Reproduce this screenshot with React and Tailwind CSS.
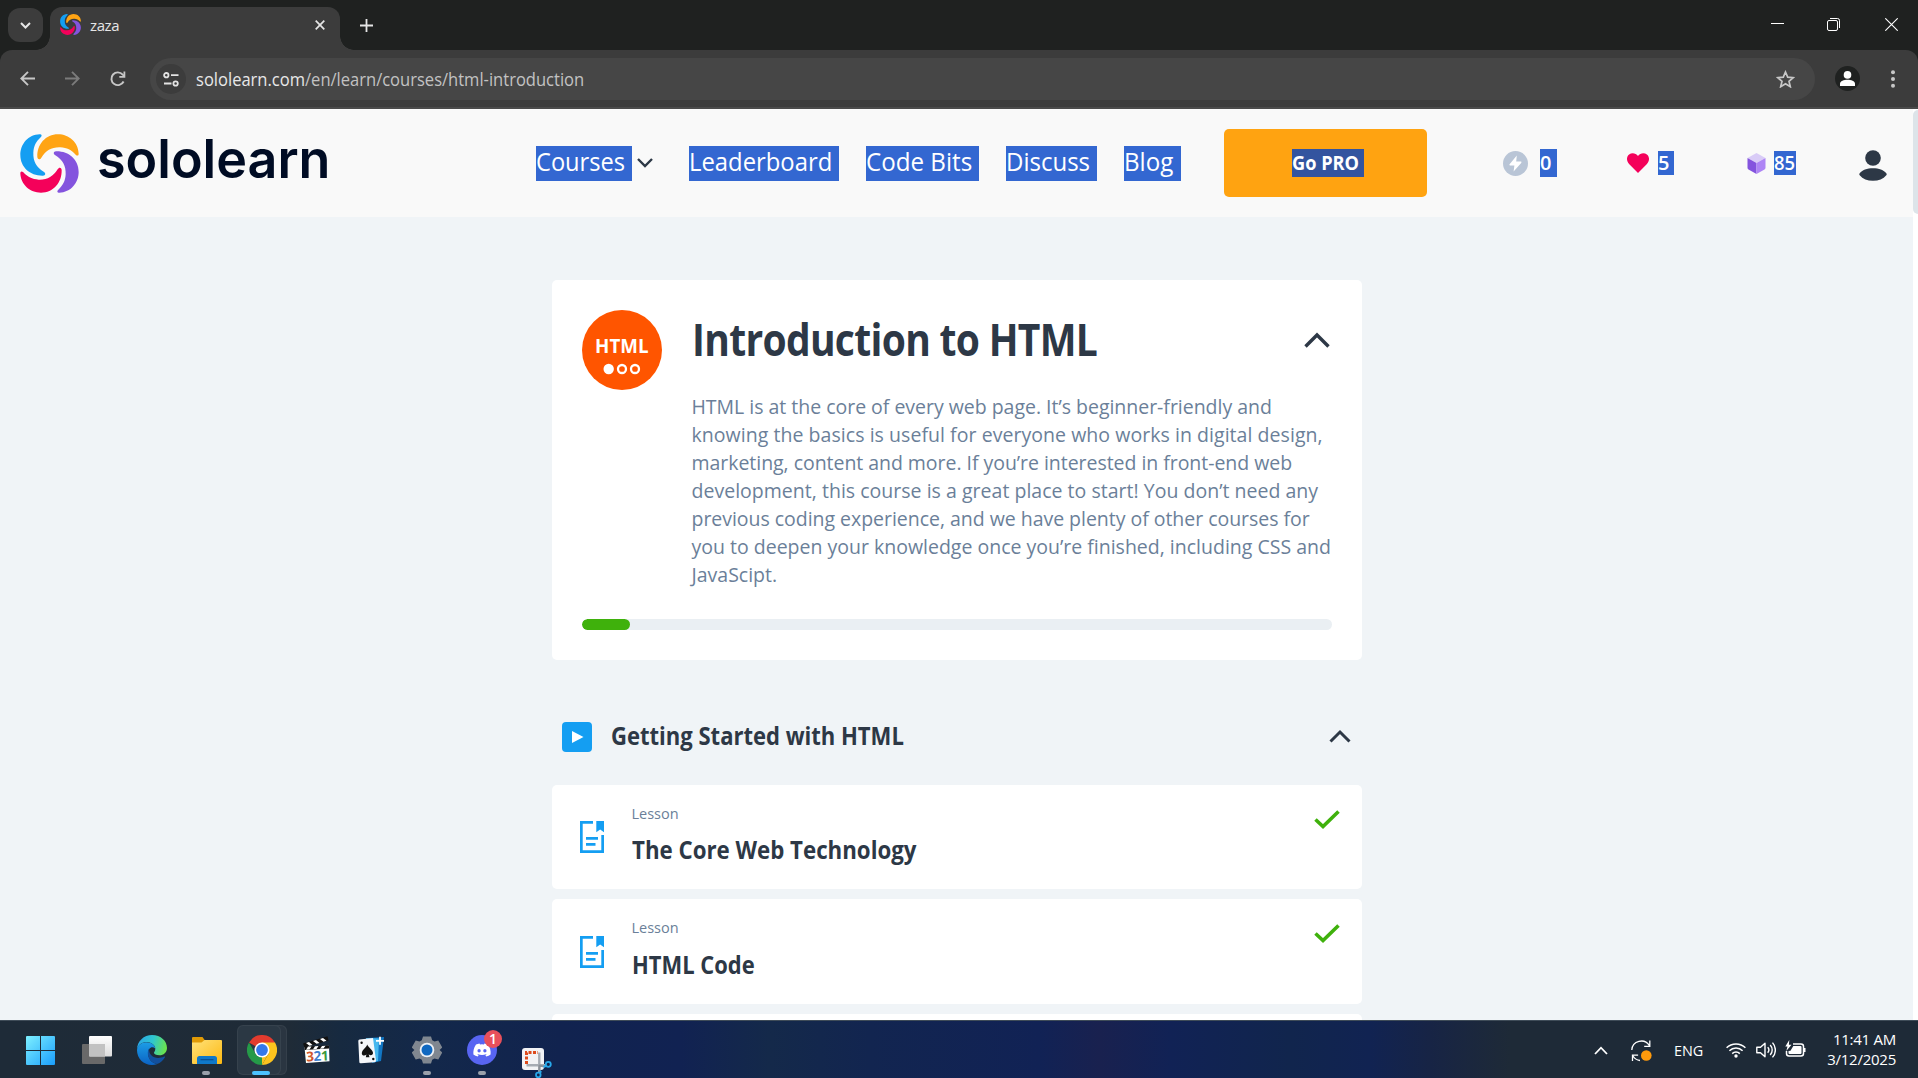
import React from "react";

const SWOOSH =
  "M118 41C84 42 60 70 60 103C60 140 90 166 128 165C136 164 137 157 130 153C108 139 98 122 99 96C100 76 107 63 121 50C126 45 124 41 118 41Z";

function Logo({ className }) {
  return (
    <svg viewBox="59 40 177 177" className={className}>
      <path d={SWOOSH} fill="#149ef2" />
      <path d={SWOOSH} fill="#ffa414" transform="rotate(90 147.5 128.5)" />
      <path d={SWOOSH} fill="#8454de" transform="rotate(180 147.5 128.5)" />
      <path d={SWOOSH} fill="#f4015a" transform="rotate(270 147.5 128.5)" />
    </svg>
  );
}

function Stroke({ className, box, d, w = 2, children }) {
  return (
    <svg viewBox={box} className={className} fill="none" stroke="currentColor" strokeWidth={w}>
      {d && <path d={d} />}
      {children}
    </svg>
  );
}

function TabStrip() {
  return (
    <div className="flex h-[50px] shrink-0 bg-[#1f2120] text-[#e6e6e6]">
      <button className="mt-2 ml-2 flex h-[34px] w-[35px] items-center justify-center rounded-xl bg-[#3c3c3c]">
        <Stroke className="h-[7px] w-[11px]" box="0 0 11 7" d="M1 1l4.500 4.500L10 1" w={2} />
      </button>
      <div className="relative mt-[7px] ml-[7px] flex h-[43px] w-[290px] items-start rounded-t-xl bg-[#3c3c3c] pl-[10px]">
        <div className="absolute bottom-0 -left-[14px] h-[14px] w-[14px] bg-[radial-gradient(circle_at_0_0,transparent_13.5px,#3c3c3c_14px)]" />
        <div className="absolute -right-[14px] bottom-0 h-[14px] w-[14px] bg-[radial-gradient(circle_at_100%_0,transparent_13.5px,#3c3c3c_14px)]" />
        <Logo className="mt-[7px] h-[21px] w-[21px]" />
        <span className="mt-[8px] ml-[9px] text-[15px] leading-[20px] tracking-[-0.4px]">zaza</span>
        <Stroke className="mt-[13px] mr-[15px] ml-auto h-[10px] w-[10px]" box="0 0 10 10" d="M.7.7l8.600 8.600M9.300.7L.7 9.300" w={1.7} />
      </div>
      <Stroke className="mt-[18.500px] ml-[19.500px] h-[13px] w-[13px]" box="0 0 13 13" d="M6.500 0v13M0 6.500h13" w={1.8} />
      <div className="ml-auto flex pr-[20px] text-white">
        <Stroke className="mt-[18px] h-[13px] w-[13px]" box="0 0 13 13" d="M0 5.500h13" w={1} />
        <Stroke className="mt-[18px] ml-[43px] h-[13px] w-[13px]" box="0 0 13 13" w={1}>
          <rect x=".5" y="2.500" width="10" height="10" rx="1.500" />
          <path d="M3 .5h7.500a2 2 0 0 1 2 2V10" />
        </Stroke>
        <Stroke className="mt-[18px] ml-[45px] h-[13px] w-[13px]" box="0 0 13 13" d="M.3.3l12.400 12.400M12.700.3L.3 12.700" w={1.1} />
      </div>
    </div>
  );
}

function Toolbar() {
  return (
    <div className="h-[59px] shrink-0 bg-[#1f2120]">
      <div className="flex h-full items-start rounded-t-xl border-b-2 border-[#4a4a4a] bg-[#3c3c3c] pl-[20px]">
        <Stroke className="mt-[21px] h-[15px] w-[15px] text-[#c7c7c7]" box="0 0 15 15" d="M15 7.500H1.500M8 .8L1.300 7.500L8 14.200" w={1.9} />
        <Stroke className="mt-[21px] ml-[30px] h-[15px] w-[15px] text-[#7b7b7b]" box="0 0 15 15" d="M0 7.500h13.500M7 .8l6.700 6.700L7 14.200" w={1.9} />
        <svg viewBox="0 0 16 16" className="mt-[20.500px] ml-[30px] h-[16px] w-[16px]">
          <path d="M13.600 10.500A6.400 6.400 0 1 1 12.700 3.600L14.300 5.200" fill="none" stroke="#c7c7c7" strokeWidth="1.900" />
          <path d="M15.300 .5v6.200H9.300V4.900h4.200V.5z" fill="#c7c7c7" />
        </svg>
        <div className="mt-2 ml-[24px] flex h-[42px] w-[1665px] items-start rounded-full bg-[#464646] pl-[6px]">
          <div className="mt-[6px] flex h-[30px] w-[30px] items-center justify-center rounded-full bg-[#3c3c3c]">
            <Stroke className="h-[15px] w-[16px] text-[#e3e3e3]" box="0 0 16 15" w={1.8}>
              <circle cx="3.300" cy="3.200" r="2.200" />
              <circle cx="12.600" cy="11.500" r="2.200" />
              <path d="M8 3.200h7.500M1 11.500h7.500" />
            </Stroke>
          </div>
          <div className="mt-[8px] ml-[10px] w-[400px] origin-left scale-x-[0.945] text-[17.500px] leading-[26px] whitespace-nowrap text-[#c2c2c2]">
            <span className="text-[#e8e8e8]">sololearn.com</span>/en/learn/courses/html-introduction
          </div>
          <svg viewBox="0 0 19 18" className="mt-[12px] mr-[20px] ml-auto h-[18px] w-[19px]" fill="none" stroke="#c7c7c7" strokeWidth="1.700">
            <path d="M9.500 2l2.200 5.100 5.500.5-4.200 3.700 1.300 5.400-4.800-2.900-4.800 2.900L6 11.300 1.800 7.600l5.500-.5z" />
          </svg>
        </div>
        <div className="mt-[16px] ml-[20px] flex h-[25px] w-[25px] items-center justify-center rounded-full bg-[#1f2120]">
          <svg viewBox="0 0 15 15" className="h-[15px] w-[15px]" fill="#fff">
            <circle cx="7.500" cy="3.900" r="3.800" />
            <path d="M0 15v-2.300C0 10 4 8.700 7.500 8.700S15 10 15 12.700V15z" />
          </svg>
        </div>
        <svg viewBox="0 0 4 18" className="mt-[20px] ml-[30.500px] h-[18px] w-[4px]" fill="#c7c7c7">
          <circle cx="2" cy="2.200" r="2" />
          <circle cx="2" cy="9" r="2" />
          <circle cx="2" cy="15.800" r="2" />
        </svg>
      </div>
    </div>
  );
}

function NavItem({ box, text, children }) {
  return (
    <div className={"h-[35px] bg-[#3367d1] text-[25px] leading-[31px] whitespace-nowrap text-white " + box}>
      <span className={"inline-block origin-left " + text}>{children}</span>
    </div>
  );
}

function SiteHeader() {
  return (
    <header className="flex h-[108px] items-center bg-[#f9f9f9] pl-[19.500px]">
      <Logo className="h-[59px] w-[59px]" />
      <div className="ml-[18.500px] w-[240px] origin-left scale-x-[0.982] pb-[9px] font-['Inter',sans-serif] text-[53px] leading-[60px] font-semibold text-[#000c24]">
        sololearn
      </div>
      <nav className="ml-[199px] flex items-center">
        <NavItem box="w-[96px]" text="scale-x-[0.945]">Courses</NavItem>
        <Stroke className="ml-[5px] h-[10px] w-[16px] text-[#2d3846]" box="0 0 16 10" d="M1 1l7 7 7-7" w={2.4} />
        <NavItem box="ml-[36px] w-[150px]" text="scale-x-[0.953]">Leaderboard</NavItem>
        <NavItem box="ml-[27px] w-[113px]" text="scale-x-[0.966]">Code Bits</NavItem>
        <NavItem box="ml-[27px] w-[91px]" text="scale-x-[0.96]">Discuss</NavItem>
        <NavItem box="ml-[27px] w-[57px]" text="scale-x-[0.965]">Blog</NavItem>
      </nav>
      <button className="ml-[43px] flex h-[68px] w-[203px] items-center rounded-[5px] bg-[#ffa311] pl-[68px]">
        <span className="h-[28px] w-[72px] bg-[#33549f] text-left text-[20px] leading-[28px] font-bold text-white">
          <span className="inline-block origin-left scale-x-[0.91] whitespace-nowrap">Go PRO</span>
        </span>
      </button>
      <svg viewBox="0 0 25 25" className="ml-[76px] h-[25px] w-[25px]">
        <circle cx="12.500" cy="12.500" r="12.500" fill="#b9c5d6" />
        <path d="M13.800 4.500L6.600 13.200c-.5.7-.2 1.200.5 1.200h4.300l-.8 6.100 7.600-8.600c.6-.8.2-1.400-.5-1.400h-4.500z" fill="#fff" />
      </svg>
      <span className="ml-[12px] h-[28px] w-[17px] bg-[#3367d1] text-[20px] leading-[28px] font-semibold text-white">0</span>
      <svg viewBox="0 0 22 20" className="ml-[70px] h-[20px] w-[22px]">
        <path d="M11 20L2.300 11.300C-.8 8.200-.7 3.500 2.100 1.400 4.800-.7 8.800-.2 11 3c2.200-3.200 6.200-3.700 8.900-1.600 2.800 2.100 2.900 6.800-.2 9.900z" fill="#f4015a" />
      </svg>
      <span className="ml-[9px] h-[24px] w-[16px] bg-[#3367d1] text-[20px] leading-[24px] font-semibold text-white">5</span>
      <svg viewBox="0 0 19 21" className="ml-[73px] h-[21px] w-[19px]">
        <path d="M9.500 0L18.500 5 9.500 10 .5 5z" fill="#d9ccf7" />
        <path d="M.5 5l9 5v11L1.500 16.500a2 2 0 0 1-1-1.800z" fill="#8454de" />
        <path d="M18.500 5l-9 5v11l8-4.500a2 2 0 0 0 1-1.800z" fill="#ae85f5" />
      </svg>
      <span className="ml-[8px] h-[24px] w-[22px] bg-[#3367d1] text-[20px] leading-[24px] font-semibold text-white">
        <span className="inline-block origin-left scale-x-[0.92]">85</span>
      </span>
      <svg viewBox="0 0 28 31" className="mt-[5px] ml-[63px] h-[31px] w-[28px]" fill="#2d3846">
        <circle cx="14" cy="8" r="7.800" />
        <path d="M.5 23.500c2.700-3.700 7.500-5.300 13.500-5.300s10.800 1.600 13.500 5.300c.4.600.3 1.200-.2 1.700-3 3.600-7.700 5.600-13.300 5.600S3.700 28.800.7 25.200c-.5-.5-.6-1.100-.2-1.700z" />
      </svg>
    </header>
  );
}

function CourseCard() {
  return (
    <section className="h-[380px] rounded-[5px] bg-white px-[30px] pt-[30px]">
      <div className="flex h-[309px] items-start">
        <div className="flex h-[80px] w-[80px] shrink-0 flex-col items-center rounded-full bg-[#ff5500]">
          <span className="mt-[22px] h-[28px] scale-x-[0.96] text-[19.500px] leading-[27px] font-bold text-white">HTML</span>
          <svg viewBox="0 0 38 12" className="mt-[3px] h-[12px] w-[38px]">
            <circle cx="5.700" cy="6" r="5.200" fill="#fff" />
            <circle cx="19" cy="6" r="4" fill="none" stroke="#fff" strokeWidth="2.300" />
            <circle cx="32" cy="6" r="4" fill="none" stroke="#fff" strokeWidth="2.300" />
          </svg>
        </div>
        <div className="ml-[30px] w-[640px]">
          <div className="flex items-start justify-between">
            <h1 className="mt-[1px] w-[460px] origin-left scale-x-[0.867] text-[45px] leading-[56px] font-bold tracking-[-0.8px] whitespace-nowrap text-[#2d3846]">
              Introduction to HTML
            </h1>
            <Stroke className="mt-[21.500px] mr-[2px] h-[16px] w-[26px] shrink-0 text-[#2d3846]" box="0 0 26 16" d="M1.500 14.500L13 3l11.500 11.500" w={3.4} />
          </div>
          <p className="mt-[26px] -ml-[0.500px] text-[19.500px] leading-[28px] whitespace-nowrap text-[#6b7f99]">
            <span className="tracking-[-0.02px]">HTML is at the core of every web page. It’s beginner-friendly and</span>
            <br />
            <span className="tracking-[0.050px]">knowing the basics is useful for everyone who works in digital design,</span>
            <br />
            <span className="tracking-[-0.040px]">marketing, content and more. If you’re interested in front-end web</span>
            <br />
            <span className="tracking-[0.020px]">development, this course is a great place to start! You don’t need any</span>
            <br />
            <span className="tracking-[-0.030px]">previous coding experience, and we have plenty of other courses for</span>
            <br />
            you to deepen your knowledge once you’re finished, including CSS and
            <br />
            JavaScipt.
          </p>
        </div>
      </div>
      <div className="h-[11px] overflow-hidden rounded-full bg-[#eaeff3]">
        <div className="h-full w-[48px] rounded-full bg-[#3fb10c]" />
      </div>
    </section>
  );
}

function Lesson({ title, scale, height, iconTop, titleTop }) {
  return (
    <article className={"mb-[10px] flex items-start rounded-[5px] bg-white pl-[28px] " + height}>
      <svg viewBox="0 0 24 32" className={"h-[32px] w-[24px] " + iconTop} fill="#149ef2">
        <path d="M0 0h13v2.700H2.700v26.600h18.600V14H24v18H0z" />
        <path d="M16.300 0H24v11.300l-3.850-2.700-3.850 2.700zM6 16h12v2.700H6zM6 22h9.500v2.700H6z" />
      </svg>
      <div className="mt-[19px] ml-[27.500px] text-[#2d3846]">
        <div className="text-[14.500px] leading-[20px] text-[#6b7f99]">Lesson</div>
        <h3 className={"origin-left text-[24.500px] leading-[32px] font-bold whitespace-nowrap " + titleTop + " " + scale}>{title}</h3>
      </div>
      <svg viewBox="0 0 26 19" className="mt-[24.500px] mr-[22px] ml-auto h-[19px] w-[26px]" fill="none" stroke="#3fb10c" strokeWidth="3.600">
        <path d="M1.500 9.500l7.500 7L24.500 1.500" />
      </svg>
    </article>
  );
}

function Page() {
  return (
    <div className="flex h-[911px] shrink-0 overflow-hidden bg-[#f0f4f7]">
      <div className="w-[1913px]">
        <SiteHeader />
        <main className="mt-[63px] ml-[552px] w-[810px]">
          <CourseCard />
          <div className="mt-[62px] mb-[33px] flex h-[30px] items-start pl-[10px]">
            <svg viewBox="0 0 30 30" className="h-[30px] w-[30px]">
              <rect width="30" height="30" rx="4" fill="#149ef2" />
              <path d="M10 9l11.500 6L10 21z" fill="#fff" />
            </svg>
            <h2 className="ml-[19px] origin-left scale-x-[0.899] text-[24.500px] leading-[27px] font-bold whitespace-nowrap text-[#2d3846]">
              Getting Started with HTML
            </h2>
            <Stroke className="mt-[7px] mr-[11.500px] ml-auto h-[14px] w-[22px] text-[#2d3846]" box="0 0 22 14" d="M1.500 12.500L11 3l9.500 9.500" w={3} />
          </div>
          <Lesson title="The Core Web Technology" scale="scale-x-[0.909]" height="h-[104px]" iconTop="mt-[36px]" titleTop="mt-[10px]" />
          <Lesson title="HTML Code" scale="scale-x-[0.895]" height="h-[105px]" iconTop="mt-[37px]" titleTop="mt-[11px]" />
          <div className="h-[100px] rounded-[5px] bg-white" />
        </main>
      </div>
      <div className="w-[5px] bg-white pt-px">
        <div className="h-[104px] rounded-l-full bg-[#dde4e9]" />
      </div>
    </div>
  );
}

function Slot({ children, pill }) {
  return (
    <div className="relative flex h-[58px] w-[55.200px] shrink-0 items-center justify-center pt-[2px]">
      {children}
      {pill === "on" && <div className="absolute bottom-[3px] h-[4px] w-[18px] rounded-full bg-[#4cc2ff]" />}
      {pill === "idle" && <div className="absolute bottom-[3px] h-[4px] w-[8px] rounded-full bg-[#9aa0ab]" />}
    </div>
  );
}

function WindowsIcon() {
  return (
    <svg viewBox="0 0 29 29" className="h-[29px] w-[29px]">
      <defs>
        <linearGradient id="win" x1="0" y1="0" x2="1" y2="1">
          <stop offset="0" stopColor="#7ef0ff" />
          <stop offset="1" stopColor="#1a9dfb" />
        </linearGradient>
      </defs>
      <path d="M1 0h13v14H0V1a1 1 0 0 1 1-1zM15 0h13a1 1 0 0 1 1 1v13H15zM0 15h14v14H1a1 1 0 0 1-1-1zM15 15h14v13a1 1 0 0 1-1 1H15z" fill="url(#win)" />
    </svg>
  );
}

function TaskViewIcon() {
  return (
    <svg viewBox="0 0 30 28" className="ml-[2px] h-[28px] w-[30px]">
      <defs>
        <linearGradient id="tvw" x1="0" y1="0" x2="0" y2="1">
          <stop offset="0" stopColor="#fff" />
          <stop offset="1" stopColor="#dcdcdc" />
        </linearGradient>
      </defs>
      <rect y="8" width="23" height="20" rx="1" fill="#696969" />
      <rect x="7" width="23" height="20.500" rx="1" fill="url(#tvw)" />
      <path d="M7 8h16v12.500H8a1 1 0 0 1-1-1z" fill="#c2c2c2" />
    </svg>
  );
}

function EdgeIcon() {
  return (
    <svg viewBox="0 0 30 30" className="ml-[2px] h-[30px] w-[30px]">
      <defs>
        <linearGradient id="eg" x1="0" y1=".3" x2="1" y2=".5">
          <stop offset="0" stopColor="#2aa5e8" />
          <stop offset=".5" stopColor="#2fc6cf" />
          <stop offset="1" stopColor="#6be34b" />
        </linearGradient>
        <linearGradient id="eb" x1="0" y1="0" x2="0" y2="1">
          <stop offset="0" stopColor="#1c9de6" />
          <stop offset="1" stopColor="#0b62c4" />
        </linearGradient>
      </defs>
      <path d="M0 15C0 6 7 0 15 0c9 0 15 6 15 13 0 4.500-3.500 7.300-7.500 7.300-3.500 0-5.500-1.300-5.500-2.600 0-.9 1.300-1.400 1.300-4C18.300 10 14 7 9.500 7 4 7 .5 11 0 15z" fill="url(#eg)" />
      <path d="M0 15C.5 10.500 4.500 7.300 9.300 7.300c4.700 0 8.700 2.800 9 6.200-3.600-3.300-7.300.2-7.300 4.500 0 6 4 10 9 11.200-1.500.6-3.300.8-5 .8C6.500 30 0 23.500 0 15z" fill="url(#eb)" />
      <path d="M12.200 13.500C9 17 11 27.500 20 29.100c3.500-1.400 6.500-4 8-6.900.3-.6-.2-1-.8-.7-8 3.800-16-.5-15-8z" fill="#12509e" />
    </svg>
  );
}

function FolderIcon() {
  return (
    <svg viewBox="0 0 30 27" className="ml-[2px] h-[27px] w-[30px]">
      <defs>
        <linearGradient id="fo" x1="0" y1="0" x2="1" y2="1">
          <stop offset="0" stopColor="#ffe27a" />
          <stop offset="1" stopColor="#fdb912" />
        </linearGradient>
      </defs>
      <path d="M0 1a1 1 0 0 1 1-1h9.500l2.500 3.500L10 7H0z" fill="#e09a06" />
      <path d="M0 5.500h9.500l3-2.500H29a1 1 0 0 1 1 1v22a1 1 0 0 1-1 1H1a1 1 0 0 1-1-1z" fill="url(#fo)" />
      <path d="M5 27v-5.500A2.500 2.500 0 0 1 7.500 19h15a2.500 2.500 0 0 1 2.500 2.500V27z" fill="#0f78c9" />
      <path d="M8.500 22.700h13" stroke="#0a4f90" strokeWidth="1.200" />
    </svg>
  );
}

function ChromeIcon() {
  return (
    <svg viewBox="0 0 30 30" className="relative ml-[2px] h-[30px] w-[30px]">
      <path d="M15 15L2 7.500A15 15 0 0 1 28 7.500z" fill="#e33b2e" />
      <path d="M15 7.500h13A15 15 0 0 1 15 30l6.500-11.200z" fill="#fcc31e" />
      <path d="M2 7.500l6.500 11.300c2 3 5 3.900 8 3.500L15 30A15 15 0 0 1 2 7.500z" fill="#259a48" />
      <path d="M15 30l6.500-11.300L15 22z" fill="#fcc31e" />
      <circle cx="15" cy="15" r="7.500" fill="#fff" />
      <circle cx="15" cy="15" r="5.900" fill="#3478ea" />
    </svg>
  );
}

function ClapperIcon() {
  return (
    <svg viewBox="0 0 27 28" className="h-[28px] w-[27px]">
      <path d="M0 7.500L24.500 .3l1 4.200L1.500 11.500z" fill="#111" />
      <path d="M3 7l3.500 2.800 3-.9L6 6zM10 4.900l3.500 2.800 3-.8L13 4zM17 2.900l3.500 2.800 3-.9L20 2z" fill="#fff" />
      <path d="M1.500 11.300L26 9.800l.5 15.500L3 27z" fill="#fff" />
      <path d="M1.500 10.500L26 9.500v3L1.700 14z" fill="#111" />
      <path d="M5 10.600l3.500-.2-2 3-3.500.3zM12 10.200l3.500-.1-2 2.900-3.500.2zM19 9.900l3.500-.1-2 2.800-3.500.2z" fill="#fff" />
      <g fontFamily="Open Sans, sans-serif" fontWeight="700" fontSize="13.500" transform="rotate(-3 13 20)">
        <text x="3.300" y="25" fill="#d2562a">3</text>
        <text x="10.600" y="25" fill="#3d7fd0">2</text>
        <text x="18" y="25" fill="#3a9a3f">1</text>
      </g>
    </svg>
  );
}

function CardsIcon() {
  return (
    <svg viewBox="0 0 28 28" className="h-[28px] w-[28px]">
      <path d="M10 2l16-1-3 24-9 2z" fill="#1277c4" />
      <path d="M8 2l13 .5L20 25l-8 1z" fill="#46b7ee" />
      <path d="M1.500 3.500L15 2l3 22.500a1.500 1.500 0 0 1-1.500 1.700L3 27.300a1.500 1.500 0 0 1-1.700-1.500L.3 5a1.500 1.500 0 0 1 1.200-1.500z" fill="#f5f7fa" />
      <path d="M9.200 8.500c1 3 5.300 4.800 5.800 8.200.3 2.500-2.700 3.300-4.300 1.600l.8 2.900H7.800l.6-2.800c-1.500 1.900-4.700 1.300-4.600-1.200C4 13.800 8.300 11.800 9.200 8.500z" fill="#111" />
      <circle cx="3.600" cy="6.800" r="1.200" fill="#111" />
      <circle cx="15.300" cy="23" r="1.200" fill="#111" />
      <path d="M22 .8v8M18 4.800h8" stroke="#fff" strokeWidth="1.800" />
    </svg>
  );
}

function GearIcon() {
  return (
    <svg viewBox="0 0 30 30" className="h-[30px] w-[30px]">
      <path
        d="M11 1.500h8l1.200 3.700 2.300 1.300 3.800-1 4 6.900-2.700 2.600 2.700 2.600-4 6.900-3.800-1-2.300 1.300-1.200 3.700h-8L9.800 24.800l-2.300-1.300-3.800 1-4-6.900L2.400 15-.3 12.400l4-6.900 3.800 1 2.300-1.300z"
        fill="#808790"
        strokeLinejoin="round"
      />
      <circle cx="15" cy="15" r="7.300" fill="#eef1f5" />
      <circle cx="15" cy="15" r="5.500" fill="#1068c0" />
    </svg>
  );
}

function DiscordIcon() {
  return (
    <div className="relative h-[30px] w-[30px]">
      <svg viewBox="0 0 30 30" className="h-[30px] w-[30px]">
        <circle cx="15" cy="15" r="15" fill="#5865f2" />
        <path
          d="M20.900 9.600a14 14 0 0 0-3.500-1.100l-.5 1a13 13 0 0 0-3.900 0l-.5-1A14 14 0 0 0 9 9.600c-2.300 3.400-2.900 6.600-2.600 9.900a14 14 0 0 0 4.300 2.100l1-1.700-1.400-.7.400-.3a10 10 0 0 0 8.600 0l.4.300-1.400.7 1 1.700a14 14 0 0 0 4.300-2.100c.4-3.800-.6-7-2.700-9.900zM12.100 17.500c-.9 0-1.600-.8-1.600-1.700s.7-1.700 1.600-1.700 1.600.8 1.600 1.700-.7 1.700-1.600 1.700zm5.800 0c-.9 0-1.600-.8-1.600-1.700s.7-1.700 1.600-1.700 1.600.8 1.600 1.700-.7 1.700-1.600 1.700z"
          fill="#fff"
        />
      </svg>
      <div className="absolute -top-[5px] left-[17px] h-[18px] w-[18px] rounded-full bg-[#e8505b] text-center text-[14px] leading-[18px] font-semibold text-white">
        1
      </div>
    </div>
  );
}

function SnipIcon() {
  return (
    <svg viewBox="0 0 30 30" className="mt-[26px] h-[30px] w-[30px]">
      <rect width="22" height="22" rx="3" fill="#f1f2f5" />
      <path d="M4.500 16V4.500H16" fill="none" stroke="#dd4a1c" strokeWidth="3" strokeDasharray="3 1.500" />
      <path d="M17.300 4.500V24M4.500 17.300H24" fill="none" stroke="#a5abb3" strokeWidth="2.400" />
      <path d="M17 17.500l5.500 1M17.500 17l-.3 8" stroke="#8b9199" strokeWidth="2" />
      <circle cx="26.300" cy="16.300" r="2.500" fill="none" stroke="#28a8ea" strokeWidth="1.800" />
      <circle cx="16.300" cy="27" r="2.300" fill="none" stroke="#28a8ea" strokeWidth="1.800" />
      <path d="M21.500 19l3-1.500M18 25l1-2" stroke="#28a8ea" strokeWidth="2" />
    </svg>
  );
}

function Taskbar() {
  return (
    <footer className="flex h-[58px] shrink-0 items-start bg-[linear-gradient(90deg,#1e2b38_0px,#1f2b37_290px,#172a40_340px,#13284a_430px,#11234f_560px,#112252_680px,#14294a_770px,#122550_870px,#112255_1040px,#19214f_1100px,#112255_1170px,#11254d_1290px,#112352_1370px,#172445_1430px,#1e2a37_1510px,#1e2a37_1918px)] pl-[13px] text-white shadow-[inset_0_1px_0_#3f4c58]">
      <Slot><WindowsIcon /></Slot>
      <Slot><TaskViewIcon /></Slot>
      <Slot><EdgeIcon /></Slot>
      <Slot pill="idle"><FolderIcon /></Slot>
      <Slot pill="on">
        <div className="absolute top-[5px] left-[10px] h-[50px] w-[43px] rounded-md border border-white/5 bg-white/5" />
        <div className="absolute top-[5px] left-[3px] h-[50px] w-[44px] rounded-md border border-white/5 bg-[#2b3844]" />
        <ChromeIcon />
      </Slot>
      <Slot><ClapperIcon /></Slot>
      <Slot><CardsIcon /></Slot>
      <Slot pill="idle"><GearIcon /></Slot>
      <Slot pill="idle"><DiscordIcon /></Slot>
      <Slot><SnipIcon /></Slot>
      <div className="ml-auto flex items-start pr-[22px]">
        <Stroke className="mt-[26px] h-[9px] w-[14px]" box="0 0 14 9" d="M1 8l6-6.300L13 8" w={1.8} />
        <svg viewBox="0 0 21 22" className="mt-[20px] ml-[23px] h-[22px] w-[21px]" fill="none" stroke="#fff" strokeWidth="1.300">
          <path d="M.8 10A9.500 9.500 0 0 1 18.300 5.500M18.800 .5v5.800h-5.600M1.500 21v-5.800h5.600M2 16a9.500 9.500 0 0 0 7 4.500" />
          <circle cx="15.300" cy="15.500" r="5.300" fill="#ff9a0c" stroke="none" />
        </svg>
        <span className="mt-[20px] ml-[22px] w-[30px] origin-left scale-x-[0.96] text-[15px] leading-[20px]">ENG</span>
        <svg viewBox="0 0 20 16" className="mt-[22px] ml-[22px] h-[16px] w-[20px]" fill="none" stroke="#fff" strokeWidth="1.500">
          <path d="M.6 5.800a13.300 13.300 0 0 1 18.800 0M3.400 8.800a9.300 9.300 0 0 1 13.200 0M6.200 11.600a5.400 5.400 0 0 1 7.600 0" />
          <circle cx="10" cy="14" r="1.700" fill="#fff" stroke="none" />
        </svg>
        <svg viewBox="0 0 20 18" className="mt-[21px] ml-[10px] h-[18px] w-[20px]" fill="none" stroke="#fff" strokeWidth="1.400" strokeLinejoin="round">
          <path d="M.8 6.300h3.700L9 2.200v13.600l-4.500-4.100H.8z" />
          <path d="M11.700 6.300a4 4 0 0 1 0 5.400M14.200 3.900a7.500 7.500 0 0 1 0 10.200M16.500 1.600a11 11 0 0 1 0 14.800" />
        </svg>
        <svg viewBox="0 0 21 18" className="mt-[20px] ml-[9px] h-[18px] w-[21px]">
          <path d="M8 4h8a2.500 2.500 0 0 1 2.500 2.500v7A2.500 2.500 0 0 1 16 16H4a2.500 2.500 0 0 1-2.500-2.500V11" fill="none" stroke="#fff" strokeWidth="1.500" />
          <path d="M8.300 6H15.500a1 1 0 0 1 1 1v6a1 1 0 0 1-1 1H4.500a1 1 0 0 1-1-1v-2l2-.3zM19 8h1.500v4H19z" fill="#fff" />
          <path d="M4.300 0L.3 6.500h2.200L1.300 11 6.500 4.800H3.900z" fill="#fff" />
        </svg>
        <div className="mt-[9px] ml-[21px] w-[69px] text-right text-[15px] leading-[20px] tracking-[-0.250px] whitespace-nowrap">
          <div>11:41 AM</div>
          <div>3/12/2025</div>
        </div>
      </div>
    </footer>
  );
}

export default function App() {
  return (
    <div className="flex h-[1078px] w-[1918px] flex-col overflow-hidden font-['Open_Sans','Noto_Sans',sans-serif]">
      <TabStrip />
      <Toolbar />
      <Page />
      <Taskbar />
    </div>
  );
}
